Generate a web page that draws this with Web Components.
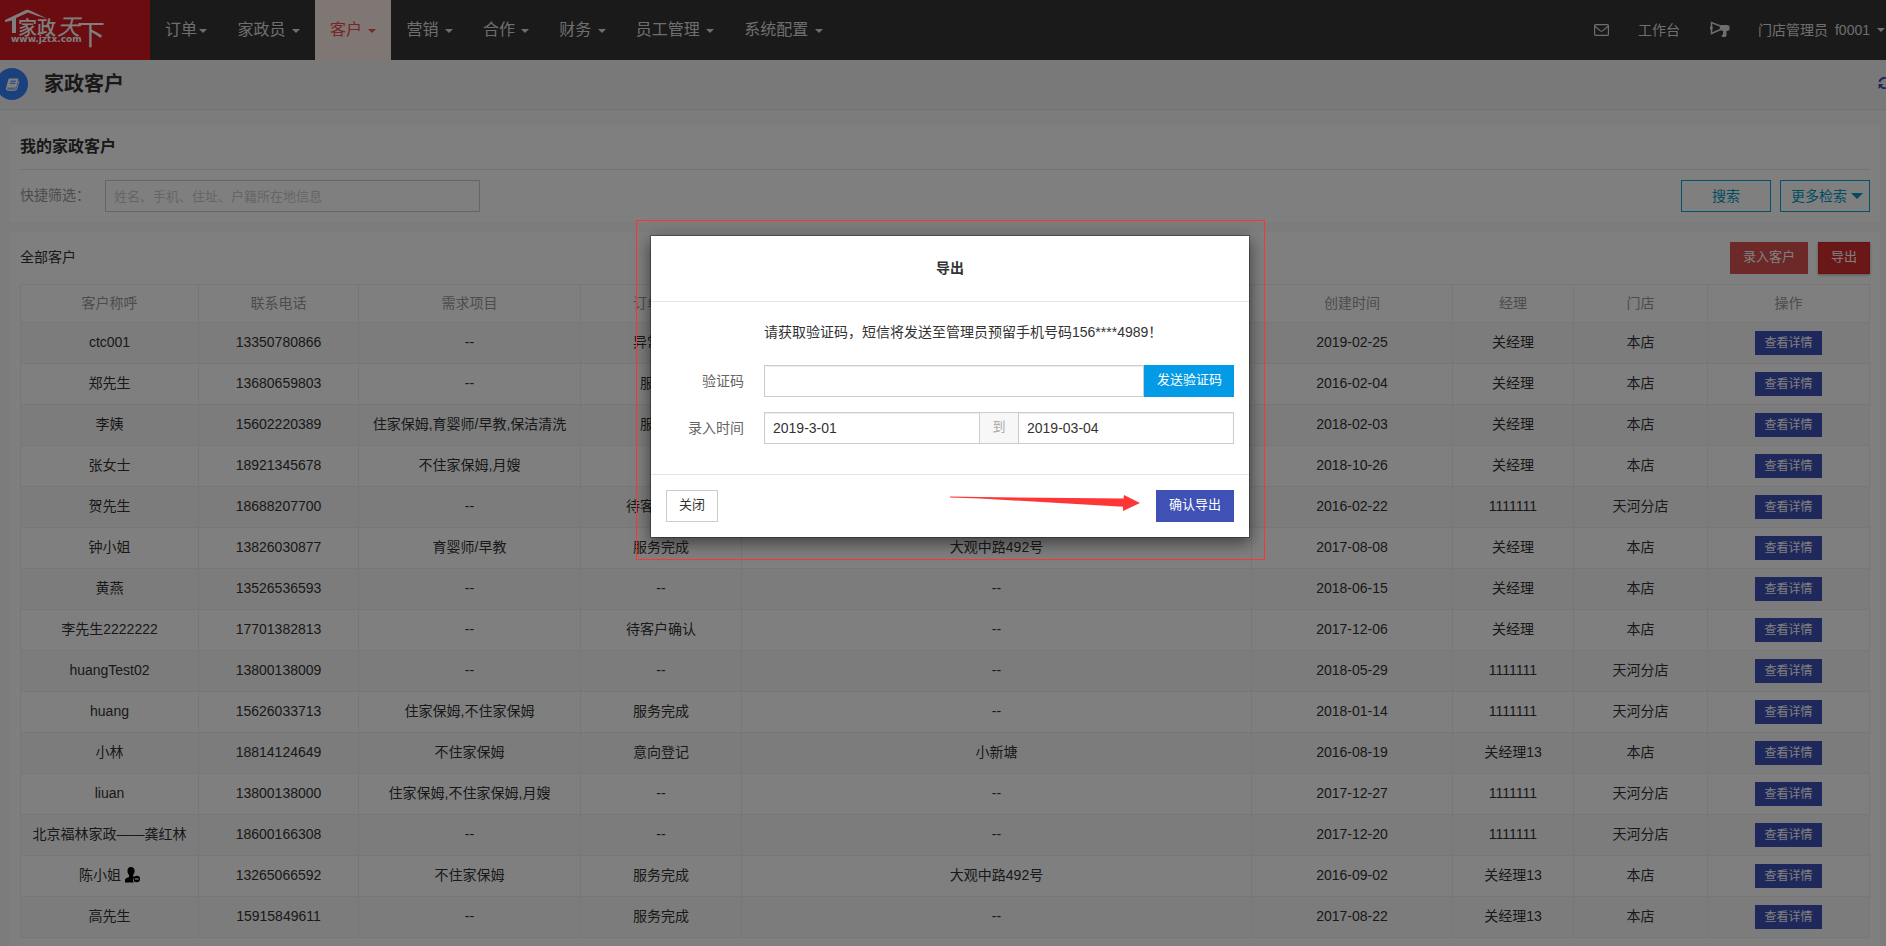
<!DOCTYPE html>
<html lang="zh-CN">
<head>
<meta charset="utf-8">
<title>家政客户</title>
<style>
  html, body { margin: 0; }
  body {
    overflow-x: hidden;
    background: #f8f8f8;
    color: #333;
    font: 14px/20px "Liberation Sans", "Noto Sans CJK SC", sans-serif;
  }
</style>
</head>
<body>
<crm-app></crm-app>

<script>
const define = (name, html, setup) => {
  const template = document.createElement('template');
  template.innerHTML = html;
  customElements.define(name, class extends HTMLElement {
    connectedCallback() {
      if (this.shadowRoot) return;
      const root = this.attachShadow({ mode: 'open' });
      root.append(template.content.cloneNode(true));
      if (setup) setup(this, root);
    }
  });
};

define('ui-button', `
  <style>
    :host { display: inline-block; vertical-align: middle; }
    button {
      display: block; box-sizing: border-box; width: 100%; height: 32px; margin: 0;
      padding: 0 12px 2px; border: 1px solid transparent; border-radius: 0;
      background: #fff; color: #333; font: inherit; font-size: 13px; line-height: 28px;
      white-space: nowrap; cursor: pointer;
    }
    :host([kind="plain"]) button { border-color: #ccc; }
    :host([kind="outline"]) button { border-color: #04a5d4; color: #0499c4; font-size: 14px; background: none; padding: 0 10px; }
    :host([kind="danger"]) button { background: #d9534f; color: #fff; }
    :host([kind="strong"]) button { background: #d32f2f; border-color: #c62828; color: #fff; box-shadow: 0 1px 3px rgba(0,0,0,.3); }
    :host([kind="info"]) button { background: #039be5; color: #fff; }
    :host([kind="primary"]) button { background: #3f51b5; color: #fff; }
    :host([size="small"]) button { height: 24px; padding: 0 8px; font-size: 12px; line-height: 22px; }
  </style>
  <button type="button"><slot></slot></button>`);

define('nav-item', `
  <style>
    :host { display: block; }
    a {
      display: block; padding: 0 15px; color: #ddd; font-size: 16px; line-height: 60px;
      text-decoration: none; white-space: nowrap;
    }
    :host([active]) a { background: #ffeee6; color: #ee4e4e; }
    i { display: inline-block; margin-left: 2px; border: 4px solid transparent; border-top-color: currentColor; border-bottom: 0; vertical-align: middle; }
    :host([tight]) i { margin-left: -2px; }
  </style>
  <a href="#"><slot></slot> <i></i></a>`);

define('brand-logo', `
  <style>
    :host { display: block; width: 150px; height: 60px; background: #d71820; }
    svg { display: block; }
    text { font-family: "Noto Sans CJK SC", sans-serif; }
  </style>
  <svg width="150" height="60" viewBox="0 0 150 60" fill="#fff" role="img" aria-label="家政天下">
    <path d="M5 20 26 10Q28 9.500 30 10.500L47 18.500Q37 16 28 12.500L16 18V33H12V20.500L5 22Z"/>
    <text x="18" y="35" font-size="19" font-weight="500">家政</text>
    <text x="57" y="35" font-size="23" font-style="italic">天</text>
    <text x="77" y="45" font-size="28">下</text>
    <text x="11" y="42" font-size="9" style="font-family:'DejaVu Sans',sans-serif" font-weight="700">www.jztx.com</text>
  </svg>`);

define('app-header', `
  <style>
    :host { display: flex; height: 60px; background: #343434; color: #ddd; }
    nav, .tools { display: flex; }
    .tools { margin-left: auto; align-items: center; padding-right: 15px; }
    .tools a { display: flex; align-items: center; color: #ddd; text-decoration: none; white-space: nowrap; }
    .mail { margin-right: 29px; }
    .work { margin-right: 30px; }
    .news { margin-right: 28px; }
    .user { gap: 7px; }
    i { border: 4px solid transparent; border-top-color: currentColor; border-bottom: 0; }
  </style>
  <brand-logo></brand-logo>
  <nav>
    <nav-item tight>订单</nav-item>
    <nav-item>家政员</nav-item>
    <nav-item active>客户</nav-item>
    <nav-item>营销</nav-item>
    <nav-item>合作</nav-item>
    <nav-item>财务</nav-item>
    <nav-item>员工管理</nav-item>
    <nav-item>系统配置</nav-item>
  </nav>
  <div class="tools">
    <a class="mail" href="#" aria-label="消息">
      <svg width="15" height="12" viewBox="0 0 15 12" fill="none" stroke="currentColor" stroke-width="1.200"><rect x=".6" y=".6" width="13.800" height="10.800" rx="1"/><path d="M1 2.200 6 6.600Q7.500 7.800 9 6.600L14 2.200"/></svg>
    </a>
    <a class="work" href="#">工作台</a>
    <a class="news" href="#" aria-label="公告">
      <svg width="20" height="18" viewBox="0 0 20 18"><path d="M1.500 1.500V12.500L10.500 8.500V5Z" fill="none" stroke="currentColor" stroke-width="1.500"/><path d="M0 5.500h2.500v3H0ZM10 4.500 12 4H17.500L19.500 5V9L17.500 10H16.500V14.500L15.500 16H12.500L11.500 15 13 13V10L10 9Z" fill="currentColor"/></svg>
    </a>
    <a class="user" href="#"><span>门店管理员</span><span>f0001</span><i></i></a>
  </div>`);

define('page-title', `
  <style>
    :host { display: flex; align-items: center; box-sizing: border-box; height: 50px; padding-bottom: 1px; border-bottom: 1px solid #e4e4e4; background: #f2f2f2; }
    .badge { display: grid; place-items: center; width: 32px; height: 32px; margin-left: -4px; border-radius: 50%; background: #3481fa; }
    h1 { flex: 1; margin: 0 0 0 16px; font-size: 20px; line-height: 28px; }
    button { padding: 0 0 2px; margin-right: 8px; border: 0; background: none; color: #3f51b5; line-height: 0; }
  </style>
  <span class="badge">
    <svg width="15" height="13" viewBox="0 0 15 13"><path d="M4.500.500H12.500Q13.700.500 13.300 1.800L11 10.300Q10.600 11.500 9.400 11.500H2Q.6 11.500 1 10L3.300 1.500Q3.600.500 4.500.500Z" fill="#fff"/><path d="M5.500 3.200H11M4.900 5.300H10.400" stroke="#3481fa"/><path d="M1.200 10.800Q1.500 12.300 3 12.300H10Q11.300 12.300 11.700 11L14.100 3" fill="none" stroke="#fff"/><path d="M2.200 10.200H9.600Q10.300 10.200 10.500 9.600" fill="none" stroke="#3481fa" stroke-width=".8"/></svg>
  </span>
  <h1><slot></slot></h1>
  <button type="button" aria-label="刷新">
    <svg width="14" height="12" viewBox="0 0 14 12" fill="none" stroke="currentColor" stroke-width="2"><path d="M1.500 5A5.500 5 0 0 1 11.500 3M12.500 7A5.500 5 0 0 1 2.500 9"/><path d="M13.500 0V5H8.500ZM.5 12V7H5.500Z" fill="currentColor" stroke="none"/></svg>
  </button>`);

define('panel-card', `
  <style>
    :host { display: block; padding: 10px 10px 8px; background: #fff; }
  </style>
  <slot></slot>`);

define('search-filter', `
  <style>
    :host { display: block; }
    h2 { margin: 0; padding-bottom: 10px; border-bottom: 1px solid #e4e4e4; font-size: 16px; line-height: 24px; }
    form { display: flex; align-items: center; margin: 10px 0 2px; }
    label { width: 85px; padding-bottom: 2px; color: #999; }
    input {
      box-sizing: border-box; width: 375px; height: 32px; margin-right: auto; padding: 0 8px;
      border: 1px solid #ccc; border-radius: 0; background: #fff; font: inherit; font-size: 13px;
    }
    input::placeholder { color: #ccc; }
    ui-button { width: 90px; margin-left: 9px; }
    .more { display: flex; align-items: center; gap: 4px; }
    i { border: 6px solid transparent; border-top-color: currentColor; border-bottom: 0; }
  </style>
  <h2>我的家政客户</h2>
  <form>
    <label for="q">快捷筛选：</label>
    <input id="q" type="text" placeholder="姓名、手机、住址、户籍所在地信息">
    <ui-button kind="outline">搜索</ui-button>
    <ui-button kind="outline"><span class="more">更多检索<i></i></span></ui-button>
  </form>`);

const customers = [
  ['ctc001', '13350780866', '--', '异常订单', '', '2019-02-25', '关经理', '本店'],
  ['郑先生', '13680659803', '--', '服务中', '', '2016-02-04', '关经理', '本店'],
  ['李姨', '15602220389', '住家保姆,育婴师/早教,保洁清洗', '服务中', '', '2018-02-03', '关经理', '本店'],
  ['张女士', '18921345678', '不住家保姆,月嫂', '', '', '2018-10-26', '关经理', '本店'],
  ['贺先生', '18688207700', '--', '待客户确认', '', '2016-02-22', '1111111', '天河分店'],
  ['钟小姐', '13826030877', '育婴师/早教', '服务完成', '大观中路492号', '2017-08-08', '关经理', '本店'],
  ['黄燕', '13526536593', '--', '--', '--', '2018-06-15', '关经理', '本店'],
  ['李先生2222222', '17701382813', '--', '待客户确认', '--', '2017-12-06', '关经理', '本店'],
  ['huangTest02', '13800138009', '--', '--', '--', '2018-05-29', '1111111', '天河分店'],
  ['huang', '15626033713', '住家保姆,不住家保姆', '服务完成', '--', '2018-01-14', '1111111', '天河分店'],
  ['小林', '18814124649', '不住家保姆', '意向登记', '小新塘', '2016-08-19', '关经理13', '本店'],
  ['liuan', '13800138000', '住家保姆,不住家保姆,月嫂', '--', '--', '2017-12-27', '1111111', '天河分店'],
  ['北京福林家政——龚红林', '18600166308', '--', '--', '--', '2017-12-20', '1111111', '天河分店'],
  ['陈小姐', '13265066592', '不住家保姆', '服务完成', '大观中路492号', '2016-09-02', '关经理13', '本店'],
  ['高先生', '15915849611', '--', '服务完成', '--', '2017-08-22', '关经理13', '本店'],
];
const removedIcon = '<svg width="15" height="16" viewBox="0 0 15 16"><path d="M6 0C8.500 0 9.800 1.800 9.600 4.200 9.500 6 8.800 7 8.200 7.800V9.500L9.500 10.200A3.800 3.800 0 0 0 9 15.500H0V12.800Q0 11.800 1.200 11.300L4 10V7.800C3.200 7 2.600 6 2.500 4.200 2.300 1.800 3.500 0 6 0Z"/><circle cx="11.800" cy="12" r="3.200"/><path d="M10 12h3.600" stroke="#fff" stroke-width="1.200"/></svg>';

define('customer-table', `
  <style>
    :host { display: block; }
    header { display: flex; align-items: center; gap: 10px; margin-bottom: 10px; }
    h2 { margin: 0 auto 0 0; padding-bottom: 2px; font-size: 14px; font-weight: 400; line-height: 20px; }
    table { width: 100%; table-layout: fixed; border: 1px solid #eee; border-width: 1px 0 0 1px; border-spacing: 0; }
    th, td { box-sizing: border-box; padding: 0 0 2px; border: 1px solid #eee; border-width: 0 1px 1px 0; text-align: center; white-space: nowrap; }
    th { height: 38px; color: #999; font-weight: 400; }
    td { height: 41px; }
    td:last-child { padding: 0; }
    tbody tr:nth-child(odd) { background: #f9f9f9; }
    td svg { margin-left: 4px; vertical-align: -3px; fill: #000; }
  </style>
  <header>
    <h2>全部客户</h2>
    <ui-button kind="danger">录入客户</ui-button>
    <ui-button kind="strong">导出</ui-button>
  </header>
  <table>
    <colgroup>
      <col style="width:178px"><col style="width:160px"><col style="width:222px"><col style="width:161px"><col>
      <col style="width:201px"><col style="width:121px"><col style="width:134px"><col style="width:162px">
    </colgroup>
    <thead><tr><th>客户称呼</th><th>联系电话</th><th>需求项目</th><th>订单状态</th><th></th><th>创建时间</th><th>经理</th><th>门店</th><th>操作</th></tr></thead>
    <tbody></tbody>
  </table>`,
  (host, root) => {
    root.querySelector('tbody').innerHTML = customers.map(row =>
      '<tr>' + row.map(cell => `<td>${cell}${cell === '陈小姐' ? removedIcon : ''}</td>`).join('') +
      '<td><ui-button kind="primary" size="small">查看详情</ui-button></td></tr>').join('');
  });

define('export-dialog', `
  <style>
    :host { position: relative; display: block; box-sizing: border-box; width: 600px; border: 1px solid rgba(0,0,0,.3); background: #fff; background-clip: padding-box; box-shadow: 0 5px 15px rgba(0,0,0,.5); }
    h2 { margin: 0; padding: 22px 0 23px; border-bottom: 1px solid #e5e5e5; font-size: 14px; line-height: 20px; text-align: center; }
    form { display: grid; grid-template-columns: 93px 1fr; gap: 15px 20px; padding: 20px 15px 30px 0; }
    p { grid-column: 2; margin: 0; padding-bottom: 8px; line-height: 20px; }
    label { color: #666; line-height: 32px; text-align: right; }
    .group { display: flex; }
    input {
      box-sizing: border-box; flex: 1; min-width: 0; height: 32px; padding: 0 8px; border: 1px solid #ccc; border-radius: 0;
      box-shadow: inset 0 1px 1px rgba(0,0,0,.075); color: #333; font: inherit;
    }
    .group ui-button { width: 90px; }
    .to { box-sizing: border-box; width: 38px; height: 32px; border: 1px solid #ccc; border-width: 1px 0; background: #f7f7f7; color: #aaa; font-size: 13px; line-height: 28px; text-align: center; }
    footer { display: flex; justify-content: space-between; align-items: center; padding: 15px; border-top: 1px solid #e5e5e5; }
    .arrow { flex: none; margin: 0 16px 0 auto; }
    .frame { position: absolute; inset: -16px -16px -23px -15px; border: 1px solid #f33; pointer-events: none; }
  </style>
  <h2>导出</h2>
  <form>
    <p>请获取验证码，短信将发送至管理员预留手机号码156****4989！</p>
    <label for="code">验证码</label>
    <div class="group"><input id="code" type="text"><ui-button kind="info">发送验证码</ui-button></div>
    <label for="from">录入时间</label>
    <div class="group"><input id="from" type="text" value="2019-3-01"><span class="to">到</span><input type="text" value="2019-03-04" aria-label="结束时间"></div>
  </form>
  <footer>
    <ui-button kind="plain">关闭</ui-button>
    <svg class="arrow" width="190" height="22" viewBox="0 0 190 22" fill="#ff3636"><path d="M0 1.500 30 2 173.500 3.500 174 0 190 8 173 16 173 11.700 30 3.500 0 2.500Z"/></svg>
    <ui-button kind="primary">确认导出</ui-button>
  </footer>
  <div class="frame"></div>`);

define('crm-app', `
  <style>
    :host { display: block; width: calc(100% + 14px); }
    .stage { position: relative; min-height: 100vh; }
    main { display: grid; gap: 10px; padding: 15px 20px 0 10px; }
    .backdrop {
      position: absolute; inset: 0; box-sizing: border-box; padding-top: 235px;
      display: flex; justify-content: center; align-items: flex-start; background: rgba(0,0,0,.5);
    }
  </style>
  <div class="stage">
    <app-header></app-header>
    <page-title>家政客户</page-title>
    <main>
      <panel-card><search-filter></search-filter></panel-card>
      <panel-card><customer-table></customer-table></panel-card>
    </main>
    <div class="backdrop"><export-dialog role="dialog" aria-label="导出"></export-dialog></div>
  </div>`);
</script>
</body>
</html>
